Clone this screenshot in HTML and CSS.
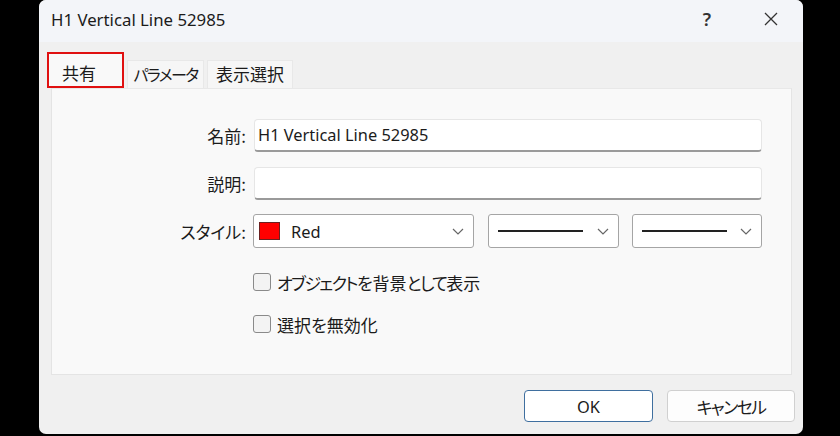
FILE: index.html
```html
<!DOCTYPE html>
<html lang="ja">
<head>
<meta charset="utf-8">
<title>H1 Vertical Line 52985</title>
<link rel="stylesheet" href="styles.css">
</head>
<body>
<div class="dialog">
  <div class="titlebar">
    <span class="title">H1 Vertical Line 52985</span>
    <span class="help">?</span>
    <span class="close">
      <svg width="14" height="14" viewBox="0 0 14 14"><path d="M1 1 L13 13 M13 1 L1 13" stroke="#333" stroke-width="1.3" fill="none"/></svg>
    </span>
  </div>
  <div class="tabs">
    <div class="tab active">共有</div>
    <div class="tab params"><span class="kana">パラメータ</span></div>
    <div class="tab view">表示選択</div>
  </div>
  <div class="panel">
    <div class="form">
      <label class="lbl">名前:</label>
      <div class="input">H1 Vertical Line 52985</div>
      <label class="lbl">説明:</label>
      <div class="input"></div>
      <label class="lbl">スタイル:</label>
      <div class="selects">
        <div class="select color"><span class="swatch"></span><span class="sel-text">Red</span><svg class="chev" width="12" height="7" viewBox="0 0 12 7"><path d="M1 1 L6 6 L11 1" stroke="#666" stroke-width="1.2" fill="none"/></svg></div>
        <div class="select line"><span class="line-sample"></span><svg class="chev" width="12" height="7" viewBox="0 0 12 7"><path d="M1 1 L6 6 L11 1" stroke="#666" stroke-width="1.2" fill="none"/></svg></div>
        <div class="select line"><span class="line-sample"></span><svg class="chev" width="12" height="7" viewBox="0 0 12 7"><path d="M1 1 L6 6 L11 1" stroke="#666" stroke-width="1.2" fill="none"/></svg></div>
      </div>
    </div>
    <div class="checks">
      <div class="check"><span class="box"></span><span><span class="kana">オブジェクト</span>を背景<span class="kana">として</span>表示</span></div>
      <div class="check"><span class="box"></span><span>選択を無効化</span></div>
    </div>
  </div>
  <div class="buttons">
    <div class="btn ok">OK</div>
    <div class="btn"><span class="kana">キャンセル</span></div>
  </div>
</div>
</body>
</html>
```
FILE: styles.css
```css
* { box-sizing: border-box; }
html, body { margin: 0; padding: 0; }
body {
  width: 840px;
  height: 436px;
  background: #000;
  font-family: "Noto Sans", "Noto Sans CJK JP", sans-serif;
  color: #1b1b1b;
  overflow: hidden;
}
.tab, .lbl, .check, .btn {
  font-family: "Noto Sans CJK JP", sans-serif;
  font-feature-settings: "palt";
  white-space: nowrap;
}
.kana { letter-spacing: -1.6px; }
.dialog {
  margin-left: 39px;
  width: 764px;
  height: 434px;
  background: #f0f0f0;
  border-radius: 7px;
  overflow: hidden;
  display: flex;
  flex-direction: column;
}
.titlebar {
  height: 42px;
  background: #f3f5f9;
  display: flex;
  align-items: center;
  padding-left: 12px;
  flex: none;
}
.title {
  font-size: 16.8px;
  flex: 1;
  padding-bottom: 4px;
}
.help {
  font-size: 18px;
  font-weight: 600;
  color: #333;
  width: 20px;
  text-align: center;
  margin-right: 47px;
  padding-bottom: 4px;
}
.close {
  width: 14px;
  margin-right: 25px;
  display: flex;
  padding-bottom: 4px;
}
.tabs {
  display: flex;
  align-items: flex-end;
  height: 46px;
  padding-left: 8px;
  flex: none;
}
.tab {
  font-size: 17px;
  height: 28px;
  line-height: 26px;
  background: #f6f6f6;
  border: 1px solid #e8e8e8;
  border-bottom: none;
  margin-left: 3px;
  color: #1b1b1b;
  text-align: center;
}
.tab.params { width: 77px; font-size: 16px; }
.tab.view { width: 86px; }
.tab.active {
  height: 36px;
  width: 77px;
  margin-left: 0;
  padding: 0 0 0 13px;
  line-height: 38px;
  text-align: left;
  background: #f9f9f9;
  border: 2px solid #e01010;
}
.panel {
  margin-left: 12px;
  width: 741px;
  height: 287px;
  background: #f9f9f9;
  border: 1px solid #e4e4e4;
  border-top: 1px solid #e8e8e8;
  flex: none;
  padding-top: 30px;
}
.form {
  display: grid;
  grid-template-columns: 194px 508px;
  column-gap: 8px;
  row-gap: 15px;
  align-items: center;
}
.lbl {
  font-size: 17px;
  text-align: right;
}
.input {
  height: 33px;
  background: #fff;
  border: 1px solid #e6e6e6;
  border-bottom: 2px solid #9a9a9a;
  border-radius: 4px;
  font-size: 16.4px;
  line-height: 29px;
  padding-left: 3px;
}
.selects {
  display: flex;
  margin-left: -1px;
  margin-top: -1px;
}
.select {
  height: 34px;
  background: #fff;
  border: 1.5px solid #a5a5a5;
  border-radius: 3px;
  display: flex;
  align-items: center;
}
.select.color { width: 222px; }
.select.line { width: 131px; margin-left: 14px; }
.select.line + .select.line { margin-left: 13px; }
.swatch {
  width: 21px;
  height: 18px;
  background: #ff0000;
  border: 1px solid #6b2020;
  margin-left: 5px;
}
.sel-text {
  font-size: 16.4px;
  margin-left: 11px;
  flex: 1;
}
.line-sample {
  width: 85px;
  height: 2px;
  background: #222;
  margin-left: 9px;
  flex: none;
}
.select.line .chev { margin-left: auto; }
.chev {
  margin-right: 9px;
}
.checks {
  padding-left: 201px;
  margin-top: 25px;
  display: flex;
  flex-direction: column;
  gap: 24px;
}
.check {
  display: flex;
  align-items: center;
  height: 18px;
  font-size: 17px;
}
.box {
  width: 18px;
  height: 18px;
  border: 1.5px solid #8a8a8a;
  border-radius: 3px;
  background: #f3f3f3;
  margin-right: 6px;
  flex: none;
}
.buttons {
  display: flex;
  justify-content: flex-end;
  gap: 14px;
  padding-right: 8px;
  margin-top: 15px;
}
.btn {
  width: 128px;
  height: 32px;
  border: 1px solid #d0d0d0;
  border-radius: 4px;
  background: #fdfdfd;
  font-size: 17px;
  display: flex;
  align-items: center;
  justify-content: center;
}
.btn.ok {
  width: 129px;
  border: 1.5px solid #3f6f9f;
  background: #fff;
  font-family: "Noto Sans", sans-serif;
  font-size: 16.4px;
}
```
